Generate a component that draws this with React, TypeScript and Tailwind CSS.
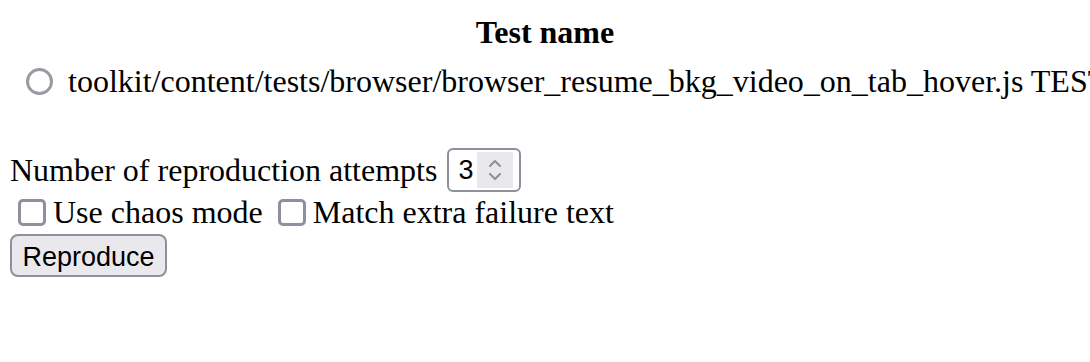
import React from "react";

export default function App() {
  return (
    <div
      className="w-[1090px] h-[362px] overflow-hidden bg-white text-black text-[32px] leading-[37px]"
      style={{ fontFamily: '"Liberation Serif", "Times New Roman", serif' }}
    >
      <div className="pt-[14px] text-center font-bold">Test name</div>
      <div className="mt-[12px] flex items-center whitespace-nowrap pl-[26px]">
        <span className="inline-block w-[27px] h-[27px] shrink-0 rounded-full border-[3.5px] border-[#9a9aa3] bg-white" />
        <span className="ml-[15px]">
          toolkit/content/tests/browser/browser_resume_bkg_video_on_tab_hover.js TEST-UNEXPECTED-FAIL
        </span>
      </div>

      <div className="mt-[48px] flex items-center pl-[10px] whitespace-nowrap">
        <span>Number of reproduction attempts</span>
        <div className="ml-[10px] flex h-[44px] w-[74px] items-center rounded-[6px] border-2 border-[#8f8f9d] pl-[9px] pr-[6px]">
          <span
            className="text-[27px] leading-none"
            style={{ fontFamily: '"Liberation Sans", Arial, sans-serif' }}
          >
            3
          </span>
          <div className="ml-auto flex h-[36px] w-[36px] flex-col items-center justify-center bg-[#e9e9ed]">
            <svg width="16" height="28" viewBox="0 0 16 28" fill="none">
              <path d="M3 10 L8 5 L13 10" stroke="#8e8e93" strokeWidth="2" strokeLinecap="round" strokeLinejoin="round" />
              <path d="M3 18 L8 23 L13 18" stroke="#8e8e93" strokeWidth="2" strokeLinecap="round" strokeLinejoin="round" />
            </svg>
          </div>
        </div>
      </div>

      <div className="mt-[2px] flex items-center pl-[18px] whitespace-nowrap">
        <span className="inline-block w-[28px] h-[27px] shrink-0 rounded-[5px] border-[3.5px] border-[#8f8f9d] bg-white" />
        <span className="ml-[7px]">Use chaos mode</span>
        <span className="ml-[15px] inline-block w-[28px] h-[27px] shrink-0 rounded-[5px] border-[3.5px] border-[#8f8f9d] bg-white" />
        <span className="ml-[7px]">Match extra failure text</span>
      </div>

      <div className="mt-[3px] pl-[10px]">
        <button
          className="h-[43px] w-[157px] rounded-[8px] border-2 border-[#8f8f9d] bg-[#e9e9ed] pt-[3px] text-[27px] leading-none text-black"
          style={{ fontFamily: '"Liberation Sans", Arial, sans-serif' }}
        >
          Reproduce
        </button>
      </div>
    </div>
  );
}
